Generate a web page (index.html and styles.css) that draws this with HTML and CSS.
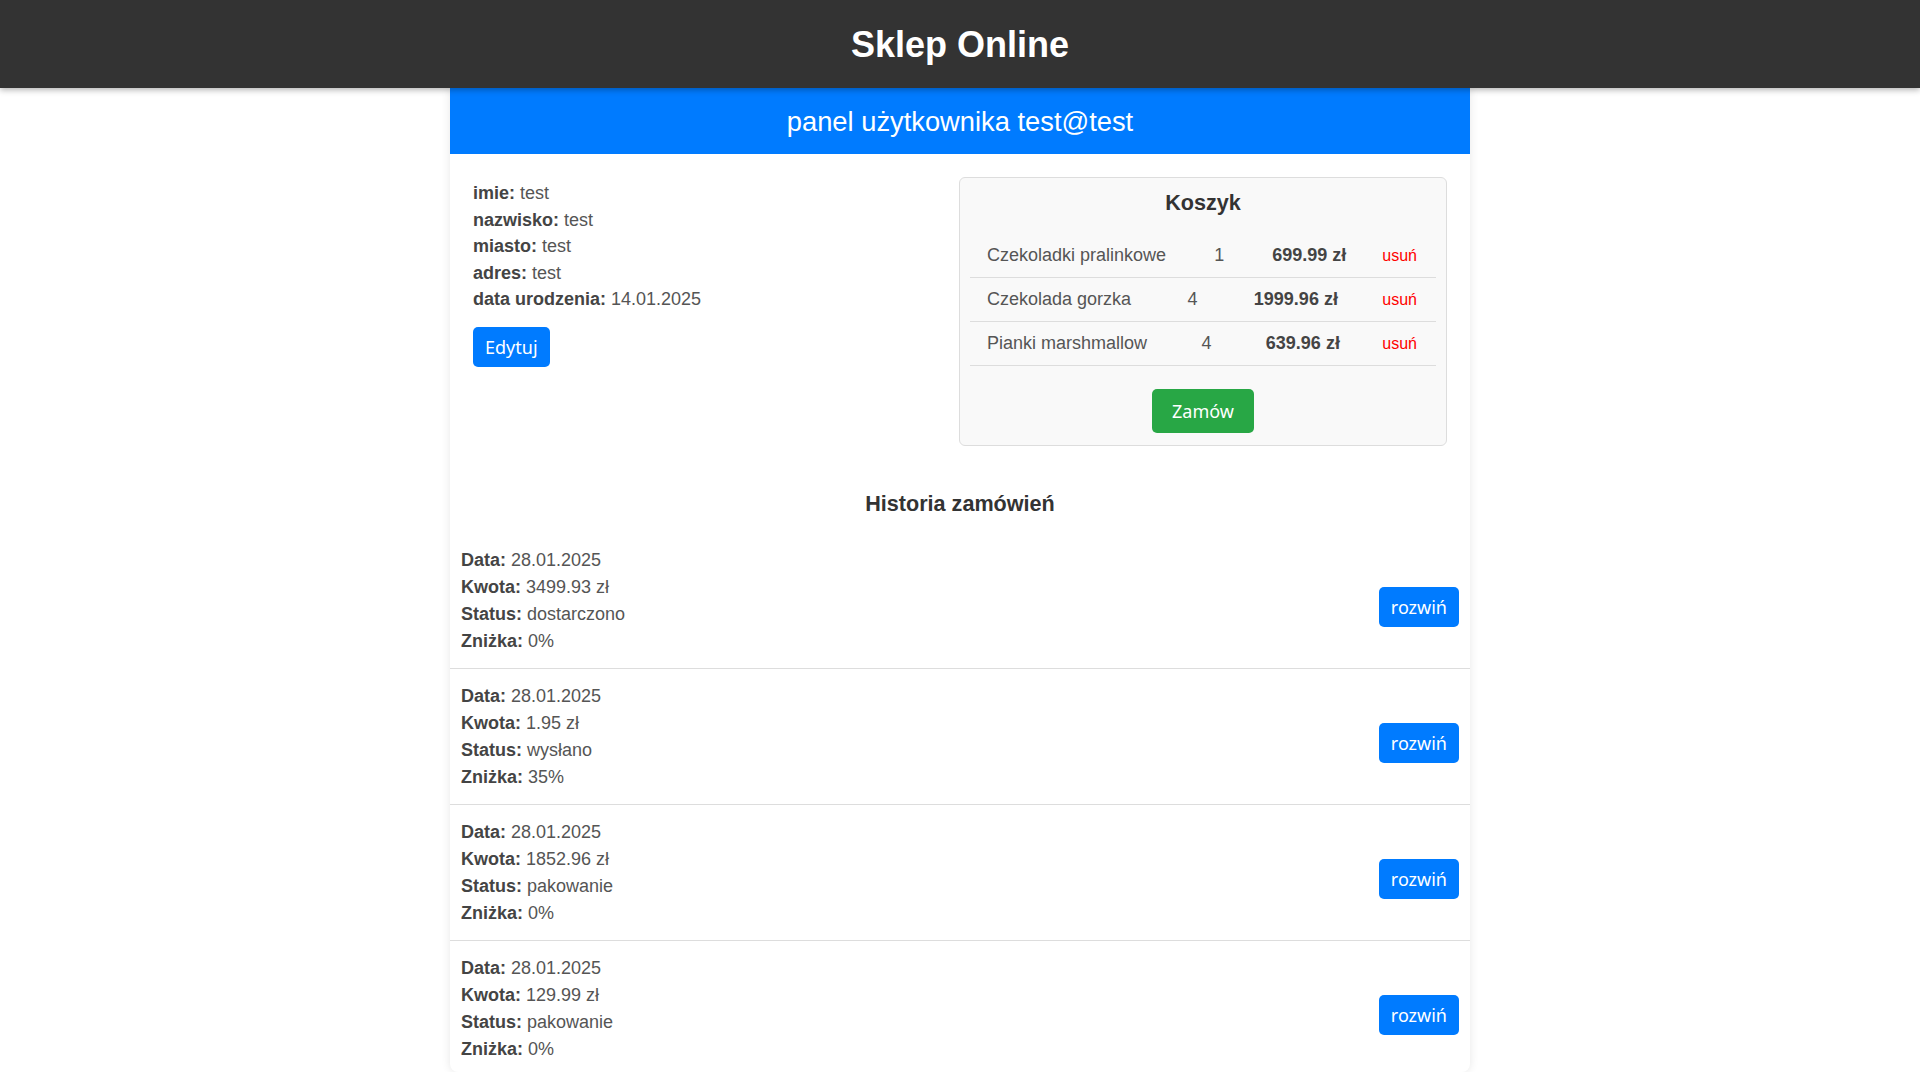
FILE: index.html
```html
<!DOCTYPE html>
<html lang="pl">
<head>
<meta charset="utf-8">
<title>Sklep Online</title>
<link rel="stylesheet" href="styles.css">
</head>
<body>
<header class="site-header">
  <h1 class="site-title">Sklep Online</h1>
</header>
<main class="container">
  <h2 class="panel-title">panel użytkownika test@test</h2>
  <section class="profile">
    <div class="user-info">
      <div class="info-line"><strong>imie:</strong> test</div>
      <div class="info-line"><strong>nazwisko:</strong> test</div>
      <div class="info-line"><strong>miasto:</strong> test</div>
      <div class="info-line"><strong>adres:</strong> test</div>
      <div class="info-line"><strong>data urodzenia:</strong> 14.01.2025</div>
      <button class="btn btn-blue edit-btn">Edytuj</button>
    </div>
    <div class="cart">
      <h3 class="cart-title">Koszyk</h3>
      <div class="cart-row">
        <span class="item-name">Czekoladki pralinkowe</span>
        <span class="item-qty">1</span>
        <strong class="item-price">699.99 zł</strong>
        <button class="remove-btn">usuń</button>
      </div>
      <div class="cart-row">
        <span class="item-name">Czekolada gorzka</span>
        <span class="item-qty">4</span>
        <strong class="item-price">1999.96 zł</strong>
        <button class="remove-btn">usuń</button>
      </div>
      <div class="cart-row">
        <span class="item-name">Pianki marshmallow</span>
        <span class="item-qty">4</span>
        <strong class="item-price">639.96 zł</strong>
        <button class="remove-btn">usuń</button>
      </div>
      <div class="cart-actions">
        <button class="btn btn-green order-btn">Zamów</button>
      </div>
    </div>
  </section>
  <section class="history">
    <h3 class="history-title">Historia zamówień</h3>
    <div class="order">
      <div class="order-info">
        <div><strong>Data:</strong> 28.01.2025</div>
        <div><strong>Kwota:</strong> 3499.93 zł</div>
        <div><strong>Status:</strong> dostarczono</div>
        <div><strong>Zniżka:</strong> 0%</div>
      </div>
      <button class="btn btn-blue expand-btn">rozwiń</button>
    </div>
    <div class="order">
      <div class="order-info">
        <div><strong>Data:</strong> 28.01.2025</div>
        <div><strong>Kwota:</strong> 1.95 zł</div>
        <div><strong>Status:</strong> wysłano</div>
        <div><strong>Zniżka:</strong> 35%</div>
      </div>
      <button class="btn btn-blue expand-btn">rozwiń</button>
    </div>
    <div class="order">
      <div class="order-info">
        <div><strong>Data:</strong> 28.01.2025</div>
        <div><strong>Kwota:</strong> 1852.96 zł</div>
        <div><strong>Status:</strong> pakowanie</div>
        <div><strong>Zniżka:</strong> 0%</div>
      </div>
      <button class="btn btn-blue expand-btn">rozwiń</button>
    </div>
    <div class="order">
      <div class="order-info">
        <div><strong>Data:</strong> 28.01.2025</div>
        <div><strong>Kwota:</strong> 129.99 zł</div>
        <div><strong>Status:</strong> pakowanie</div>
        <div><strong>Zniżka:</strong> 0%</div>
      </div>
      <button class="btn btn-blue expand-btn">rozwiń</button>
    </div>
  </section>
</main>
</body>
</html>
```
FILE: styles.css
```css
html, body {
  margin: 0;
  padding: 0;
}

body {
  font-family: "Liberation Sans", Arial, sans-serif;
  font-size: 18px;
  color: #555;
  background: #fff;
}

strong {
  color: #444;
}

.site-header {
  position: relative;
  z-index: 2;
  height: 88px;
  box-sizing: border-box;
  padding-top: 2px;
  background: #333;
  display: flex;
  align-items: center;
  justify-content: center;
  box-shadow: 0 2px 6px rgba(0, 0, 0, 0.3);
}

.site-title {
  margin: 0;
  color: #fff;
  font-size: 36px;
  font-weight: bold;
  line-height: 42px;
}

.container {
  width: 1020px;
  margin: 0 auto;
  background: #fff;
  box-shadow: 0 0 10px rgba(0, 0, 0, 0.1);
  border-radius: 0 0 8px 8px;
}

.panel-title {
  margin: 0;
  padding: 18px 0 16px;
  background: #007bff;
  color: #fff;
  text-align: center;
  font-size: 27.3px;
  font-weight: normal;
  line-height: 32px;
}

.profile {
  display: flex;
  gap: 20px;
  padding: 23px;
}

.user-info {
  flex: 1;
  padding-top: 3px;
}

.info-line {
  line-height: 26.6px;
}

.btn {
  border: none;
  border-radius: 5px;
  color: #fff;
  font-family: "Noto Sans", "Open Sans", sans-serif;
  font-size: 18px;
  line-height: 24px;
  cursor: pointer;
}

.btn-blue {
  background: #007bff;
  padding: 8px 12px;
}

.btn-green {
  background: #28a745;
  padding: 10px 20px;
}

.edit-btn {
  margin-top: 14px;
}

.cart {
  width: 488px;
  box-sizing: border-box;
  background: #f9f9f9;
  border: 1px solid #ddd;
  border-radius: 6px;
  padding: 10px 10px 12px;
}

.cart-title {
  margin: 2px 0 19px;
  text-align: center;
  color: #333;
  font-size: 21.6px;
  line-height: 25px;
}

.cart-row {
  display: flex;
  justify-content: space-between;
  align-items: center;
  padding: 11px 19px 11px 17px;
  line-height: 21px;
  border-bottom: 1px solid #ddd;
}

.item-qty {
  margin: 0 12px;
}

.item-price {
  color: #444;
}

.remove-btn {
  background: none;
  border: none;
  padding: 0;
  color: #f00;
  font-family: "Liberation Sans", Arial, sans-serif;
  font-size: 16px;
  line-height: 21px;
  cursor: pointer;
}

.cart-actions {
  margin-top: 23px;
  text-align: center;
}

.history-title {
  margin: 22px 0 17px;
  text-align: center;
  color: #333;
  font-size: 21.6px;
  line-height: 25px;
}

.order {
  display: flex;
  justify-content: space-between;
  align-items: center;
  padding: 14px 11px 13px;
  border-bottom: 1px solid #ddd;
}

.order:last-child {
  border-bottom: none;
  padding-bottom: 9px;
}

.order-info {
  line-height: 27px;
}

.expand-btn {
  margin-top: 11px;
}
```
